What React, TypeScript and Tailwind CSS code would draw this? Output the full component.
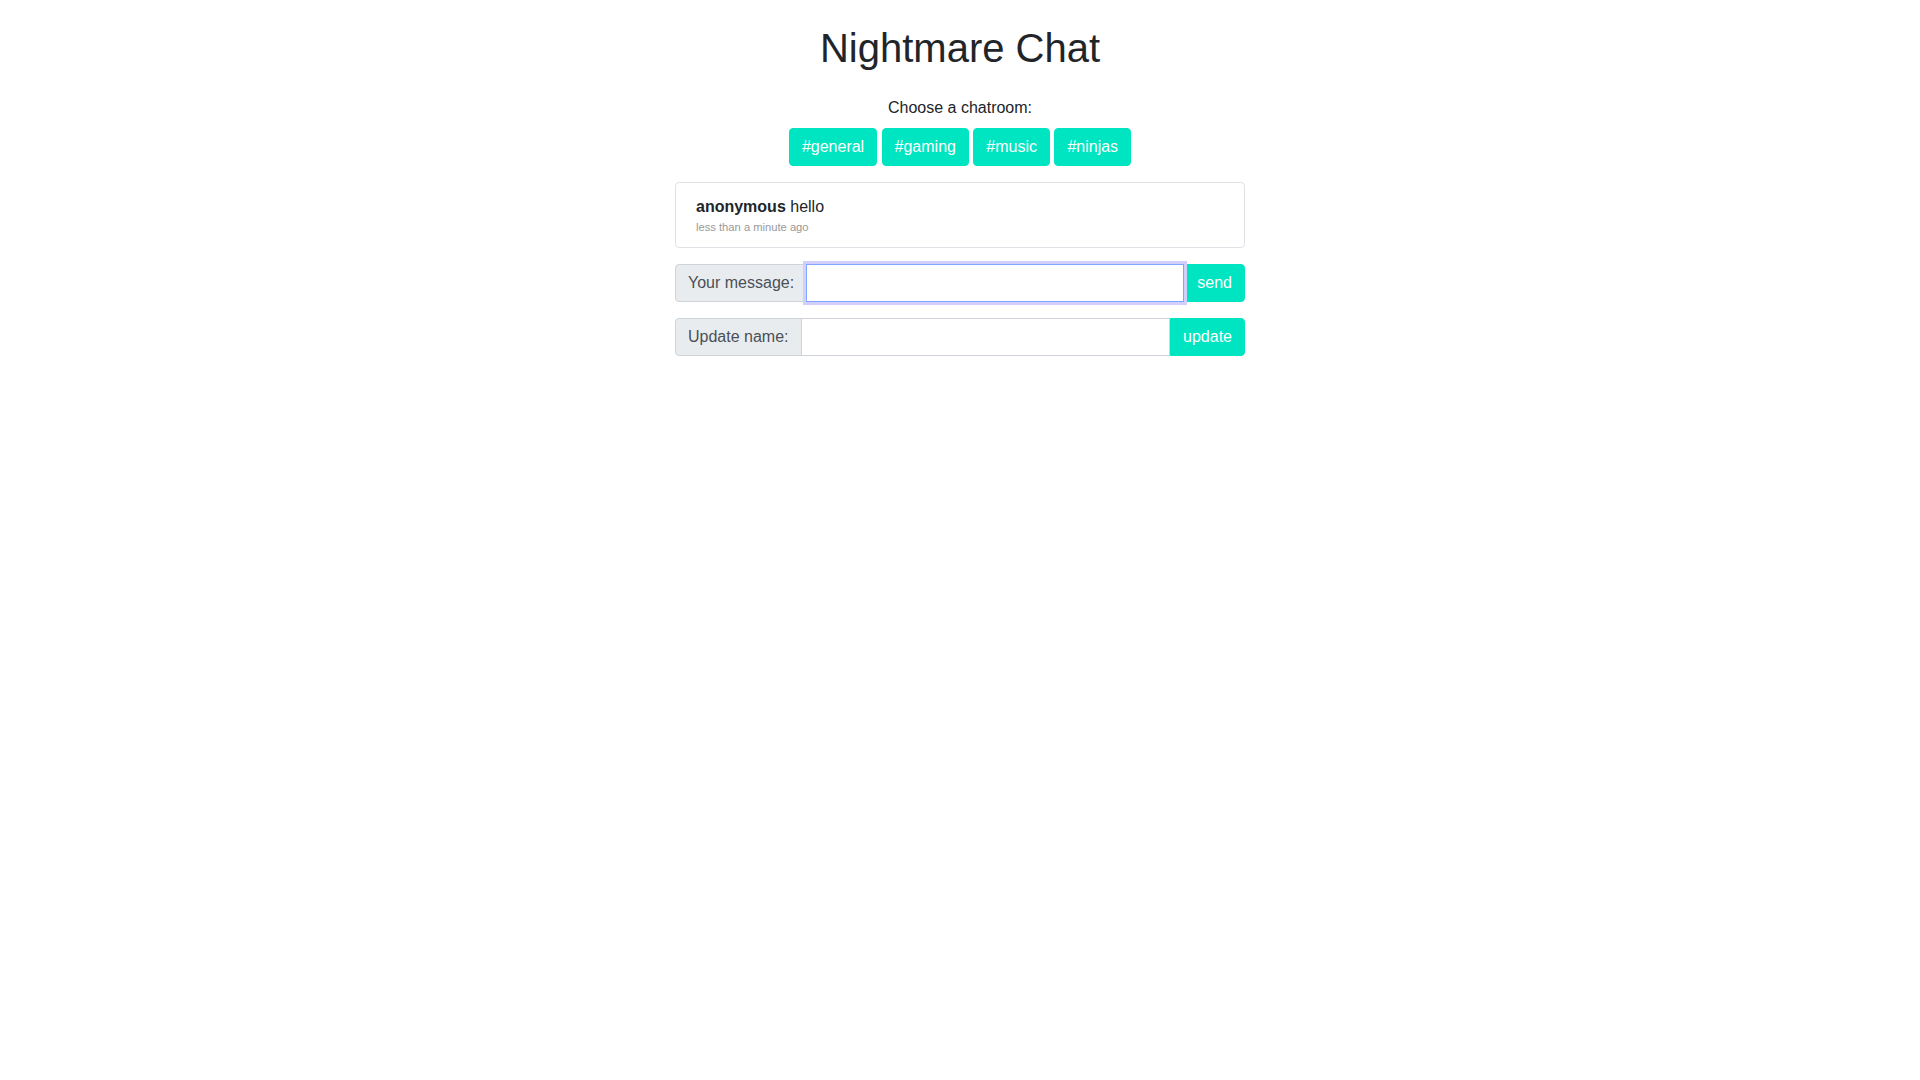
import React from 'react';

const rooms = ['#general', '#gaming', '#music', '#ninjas'];

const App: React.FC = () => {
  return (
    <div className="min-h-screen bg-white text-[#212529] font-['Liberation_Sans',Arial,sans-serif]">
      <div className="w-[570px] mx-auto pt-6">
        <h1 className="text-[40px] leading-[1.2] text-center mb-6">Nightmare Chat</h1>
        <p className="text-base leading-6 text-center">Choose a chatroom:</p>
        <div className="flex justify-center gap-[4.4px] mt-2">
          {rooms.map((room) => (
            <button
              key={room}
              className="h-[38px] px-3 text-base leading-6 text-white bg-[#00e5c1] border border-[#00e5c1] rounded"
            >
              {room}
            </button>
          ))}
        </div>

        <div className="mt-4 border border-[#dee2e6] rounded px-5 py-3">
          <div className="text-base leading-6">
            <span className="font-bold">anonymous</span> hello
          </div>
          <div className="text-[11.2px] leading-4 text-[#999999]">less than a minute ago</div>
        </div>

        <div className="mt-4 flex h-[38px]">
          <span className="flex items-center px-3 text-base text-[#495057] bg-[#e9ecef] border border-[#ced4da] rounded-l">
            Your message:
          </span>
          <input
            type="text"
            className="relative z-10 -ml-px flex-1 min-w-0 px-3 border border-[#80a6ff] outline-none shadow-[0_0_0_3px_#d3cffc]"
          />
          <button className="px-3 text-base text-white bg-[#00e5c1] border border-[#00e5c1] rounded-r">send</button>
        </div>

        <div className="mt-4 flex h-[38px]">
          <span className="flex items-center px-3 text-base text-[#495057] bg-[#e9ecef] border border-[#ced4da] rounded-l">
            Update name:
          </span>
          <input type="text" className="-ml-px flex-1 min-w-0 px-3 border border-[#ced4da] outline-none" />
          <button className="px-3 text-base text-white bg-[#00e5c1] border border-[#00e5c1] rounded-r">update</button>
        </div>
      </div>
    </div>
  );
};

export default App;
